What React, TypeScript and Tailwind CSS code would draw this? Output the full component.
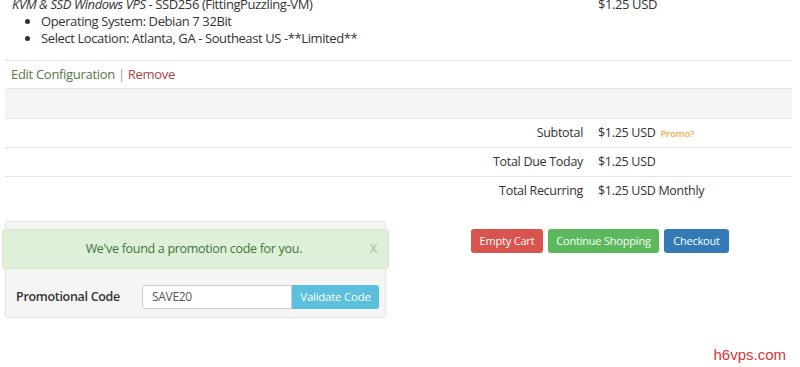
export default function App() {
  return (
    <div className="h-[367px] w-[800px] overflow-hidden bg-white font-['Open_Sans',sans-serif] text-[12.5px] tracking-[-0.3px] text-[#333]">
      <div className="mx-[5px] w-[787px]">
        {/* Cart item */}
        <div className="flex h-[61px] border-b border-[#e5e5e5] text-[13px] tracking-[-0.4px]">
          <div className="-mt-[4px] w-[593px] pl-[7px] leading-[17px]">
            <div>
              <span className="italic">KVM &amp; SSD Windows VPS</span> - SSD256 (FittingPuzzling-VM)
            </div>
            <ul className="list-disc pl-[29px]">
              <li>Operating System: Debian 7 32Bit</li>
              <li>Select Location: Atlanta, GA - Southeast US -**Limited**</li>
            </ul>
          </div>
          <div className="-mt-[4px] leading-[17px]">$1.25 USD</div>
        </div>

        <div className="flex h-[28px] items-center border-b border-[#e5e5e5] pl-[6px] text-[13px]">
          <span className="text-[#557a46]">Edit Configuration</span>
          <span className="mx-[3px] text-[#999]">|</span>
          <span className="text-[#a94442]">Remove</span>
        </div>

        <div className="h-[30px] border-b border-[#e5e5e5] bg-[#f5f5f5]" />

        {/* Totals */}
        {[
          { label: "Subtotal", value: "$1.25 USD", promo: true },
          { label: "Total Due Today", value: "$1.25 USD" },
          { label: "Total Recurring", value: "$1.25 USD Monthly" },
        ].map((row, i) => (
          <div
            key={row.label}
            className={`flex h-[29px] items-center ${i < 2 ? "border-b border-[#e5e5e5]" : ""}`}
          >
            <div className="w-[578px] text-right">{row.label}</div>
            <div className="ml-[15px]">
              {row.value}
              {row.promo && (
                <span className="ml-[5px] text-[9.5px] font-semibold tracking-[-0.2px] text-[#f0ad4e]">Promo?</span>
              )}
            </div>
          </div>
        ))}

        {/* Promo + actions */}
        <div className="mt-[15px] flex items-start">
          <div className="w-[381px] rounded-[3px] border border-[#e3e3e3] bg-[#f5f5f5] pb-[8px] pl-[10px] pr-[6px] pt-[7px]">
            <div className="-ml-[14px] -mr-[10px] flex h-[40px] items-center rounded-[3px] border border-[#d6e9c6] bg-[#dff0d8] pl-[15px] pr-[11px] text-[#3c763d]">
              <span className="flex-1 text-center">We've found a promotion code for you.</span>
              <span className="text-[13px] text-[#aab7a6]">X</span>
            </div>
            <div className="mt-[16px] flex h-[24px] items-center">
              <span className="w-[126px] font-semibold">Promotional Code</span>
              <div className="flex h-[24px] w-[150px] items-center rounded-l-[3px] border border-[#ccc] bg-white pl-[9px] text-[12px] text-[#555]">
                SAVE20
              </div>
              <button className="h-[24px] w-[87px] rounded-r-[3px] bg-[#5bc0de] text-[11.5px] tracking-[-0.25px] text-white">
                Validate Code
              </button>
            </div>
          </div>

          <div className="ml-[85px] mt-[8px] flex gap-[5px] text-[11px] tracking-[-0.2px] text-white">
            <button className="h-[24px] w-[72px] rounded-[3px] bg-[#d9534f]">Empty Cart</button>
            <button className="h-[24px] w-[111px] rounded-[3px] bg-[#5cb85c]">Continue Shopping</button>
            <button className="h-[24px] w-[65px] rounded-[3px] bg-[#337ab7]">Checkout</button>
          </div>
        </div>
      </div>

      <div className="mt-[26px] pr-[14px] text-right font-['Liberation_Sans',sans-serif] text-[15px] tracking-normal text-[#d33]">
        h6vps.com
      </div>
    </div>
  );
}
